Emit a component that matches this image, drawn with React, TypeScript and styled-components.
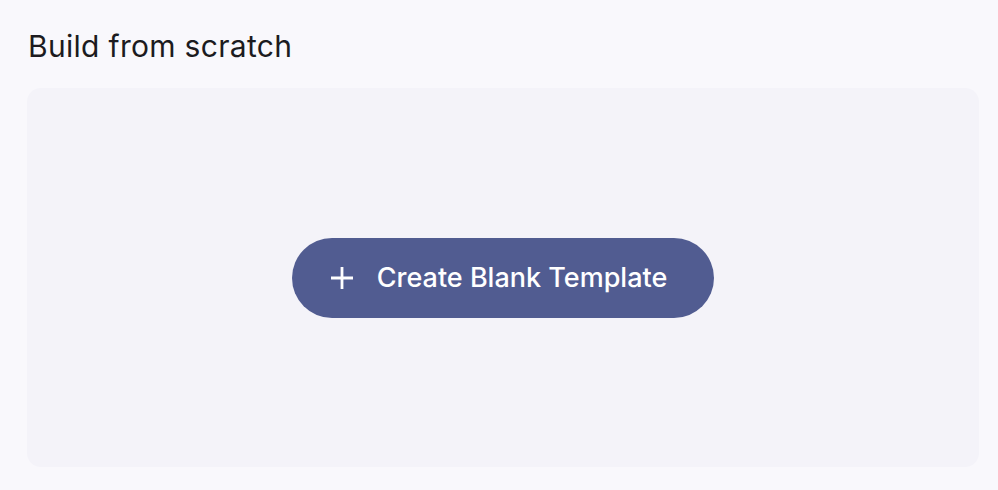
import React from "react";
import styled, { createGlobalStyle } from "styled-components";

const Global = createGlobalStyle`
  html, body { margin: 0; padding: 0; background: #f9f8fc; }
  body { font-family: Inter, "Noto Sans", sans-serif; }
`;

const Page = styled.div`
  width: 998px;
  height: 490px;
  box-sizing: border-box;
  padding: 25px 19px 23px 27px;
  display: flex;
  flex-direction: column;
  gap: 21px;
  background: #f9f8fc;
`;

const Title = styled.h2`
  margin: 0 0 0 1px;
  font-size: 30px;
  line-height: 42px;
  font-weight: 400;
  letter-spacing: 0.3px;
  color: #1c1b20;
`;

const Card = styled.div`
  flex: 1;
  border-radius: 14px;
  background: #f4f3f9;
  display: flex;
  align-items: center;
  justify-content: center;
`;

const Button = styled.button`
  height: 80px;
  border: none;
  border-radius: 40px;
  background: #515c91;
  color: #ffffff;
  display: flex;
  align-items: center;
  gap: 24px;
  padding: 0 47px 0 39px;
  font-family: Inter, "Noto Sans", sans-serif;
  font-size: 27px;
  font-weight: 500;
  cursor: pointer;
`;

const PlusIcon = () => (
  <svg width="22" height="22" viewBox="0 0 22 22" fill="none" stroke="#fff" strokeWidth="2.8">
    <path d="M11 0v22M0 11h22" />
  </svg>
);

export default function App() {
  return (
    <>
      <Global />
      <Page>
        <Title>Build from scratch</Title>
        <Card>
          <Button>
            <PlusIcon />
            Create Blank Template
          </Button>
        </Card>
      </Page>
    </>
  );
}
